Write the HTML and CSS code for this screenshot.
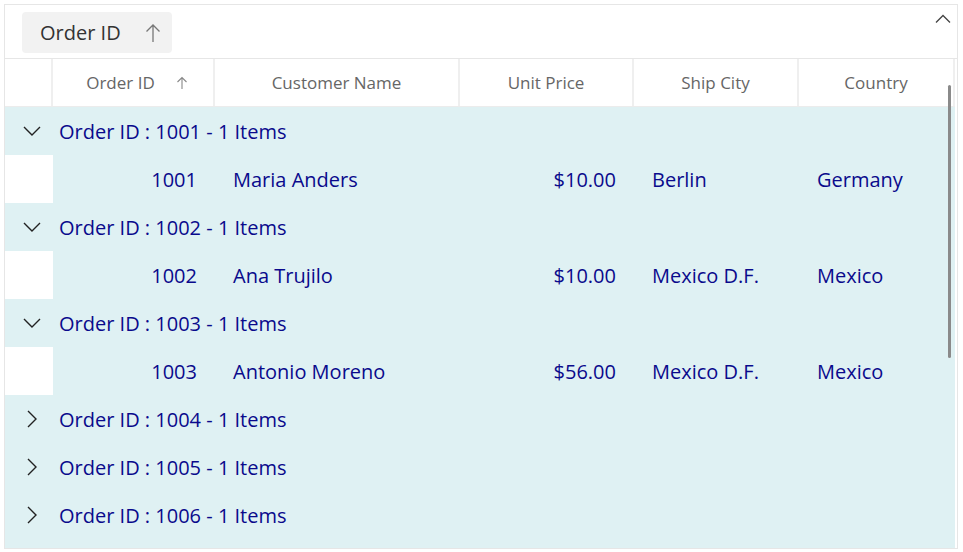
FILE: index.html
```html
<!DOCTYPE html>
<html>
<head>
<meta charset="utf-8">
<link rel="stylesheet" href="styles.css">
</head>
<body>
<div class="grid">
  <div class="droparea">
    <div class="chip"><span>Order ID</span>
      <svg class="chip-arrow" width="16" height="20" viewBox="0 0 16 20"><path d="M8 19V2M1.5 8.5L8 2l6.5 6.5" fill="none" stroke="#777" stroke-width="1.3"/></svg>
    </div>
    <svg class="collapse" width="16" height="10" viewBox="0 0 16 10"><path d="M1 8.5L8 1.5l7 7" fill="none" stroke="#444" stroke-width="1.3"/></svg>
  </div>
  <div class="header row">
    <div class="hc indent"></div>
    <div class="hc c1 sorted"><span>Order ID</span><svg class="h-arrow" width="12" height="14" viewBox="0 0 12 14"><path d="M6 13V1.5M1.5 6L6 1.5 10.5 6" fill="none" stroke="#888" stroke-width="1.1"/></svg></div>
    <div class="hc c2">Customer Name</div>
    <div class="hc c3">Unit Price</div>
    <div class="hc c4">Ship City</div>
    <div class="hc c5">Country</div>
  </div>
  <div class="body">
    <div class="group row"><span class="chev"><svg width="18" height="10" viewBox="0 0 18 10"><path d="M1 1l8 8 8-8" fill="none" stroke="#222" stroke-width="1.4"/></svg></span><span class="cap">Order ID : 1001 - 1 Items</span></div>
    <div class="data row"><div class="indent white"></div><div class="c1 r">1001</div><div class="c2">Maria Anders</div><div class="c3 r">$10.00</div><div class="c4">Berlin</div><div class="c5">Germany</div></div>
    <div class="group row"><span class="chev"><svg width="18" height="10" viewBox="0 0 18 10"><path d="M1 1l8 8 8-8" fill="none" stroke="#222" stroke-width="1.4"/></svg></span><span class="cap">Order ID : 1002 - 1 Items</span></div>
    <div class="data row"><div class="indent white"></div><div class="c1 r">1002</div><div class="c2">Ana Trujilo</div><div class="c3 r">$10.00</div><div class="c4">Mexico D.F.</div><div class="c5">Mexico</div></div>
    <div class="group row"><span class="chev"><svg width="18" height="10" viewBox="0 0 18 10"><path d="M1 1l8 8 8-8" fill="none" stroke="#222" stroke-width="1.4"/></svg></span><span class="cap">Order ID : 1003 - 1 Items</span></div>
    <div class="data row"><div class="indent white"></div><div class="c1 r">1003</div><div class="c2">Antonio Moreno</div><div class="c3 r">$56.00</div><div class="c4">Mexico D.F.</div><div class="c5">Mexico</div></div>
    <div class="group row"><span class="chev"><svg width="10" height="18" viewBox="0 0 10 18"><path d="M1 1l8 8-8 8" fill="none" stroke="#222" stroke-width="1.4"/></svg></span><span class="cap">Order ID : 1004 - 1 Items</span></div>
    <div class="group row"><span class="chev"><svg width="10" height="18" viewBox="0 0 10 18"><path d="M1 1l8 8-8 8" fill="none" stroke="#222" stroke-width="1.4"/></svg></span><span class="cap">Order ID : 1005 - 1 Items</span></div>
    <div class="group row"><span class="chev"><svg width="10" height="18" viewBox="0 0 10 18"><path d="M1 1l8 8-8 8" fill="none" stroke="#222" stroke-width="1.4"/></svg></span><span class="cap">Order ID : 1006 - 1 Items</span></div>
    <div class="group row"></div>
    <div class="scrollbar"></div>
  </div>
</div>
</body>
</html>
```
FILE: styles.css
```css
html, body { margin: 0; padding: 0; background: #fff; }
body { font-family: "Open Sans", "Noto Sans", sans-serif; }
.grid {
  margin: 4px 0 0 4px;
  width: 952px;
  height: 543px;
  border: 1px solid #e6e6e6;
  overflow: hidden;
  position: relative;
  box-sizing: content-box;
}
.droparea {
  height: 54px;
  border-bottom: 1px solid #e6e6e6;
  display: flex;
  align-items: flex-start;
  padding: 7px 0 0 17px;
  box-sizing: border-box;
  position: relative;
}
.chip {
  height: 41px;
  width: 150px;
  background: #f2f2f2;
  border-radius: 4px;
  display: flex;
  align-items: center;
  padding-left: 18px;
  box-sizing: border-box;
  font-size: 20px;
  color: #333;
}
.chip-arrow { margin-left: 24px; }
.collapse { position: absolute; right: 6px; top: 9px; }
.row { display: flex; width: 950px; }
.header { height: 48px; border-bottom: 1px solid #ececec; box-sizing: border-box; }
.hc {
  display: flex; align-items: center; justify-content: center;
  font-size: 17px; color: #666;
  border-right: 2px solid #efefef;
  box-sizing: border-box;
}
.hc.sorted { padding-left: 8px; }
.h-arrow { margin-left: 21px; }
.indent { width: 48px; flex: none; }
.c1 { width: 162px; flex: none; }
.c2 { width: 245px; flex: none; }
.c3 { width: 174px; flex: none; }
.c4 { width: 165px; flex: none; }
.c5 { width: 156px; flex: none; }
.body { position: relative; }
.group, .data { height: 48px; background: #dff1f3; align-items: center; color: #0a0a8c; font-size: 20px; }
.data > div { box-sizing: border-box; padding: 0 18px; height: 48px; display: flex; align-items: center; }
.data > .r { justify-content: flex-end; }
.data > .white { background: #fff; padding: 0; }
.chev { width: 54px; flex: none; display: flex; justify-content: center; align-items: center; }
.scrollbar {
  position: absolute; left: 943px; top: -22px;
  width: 3px; height: 273px; background: #8a8a8a; border-radius: 2px;
}
```
